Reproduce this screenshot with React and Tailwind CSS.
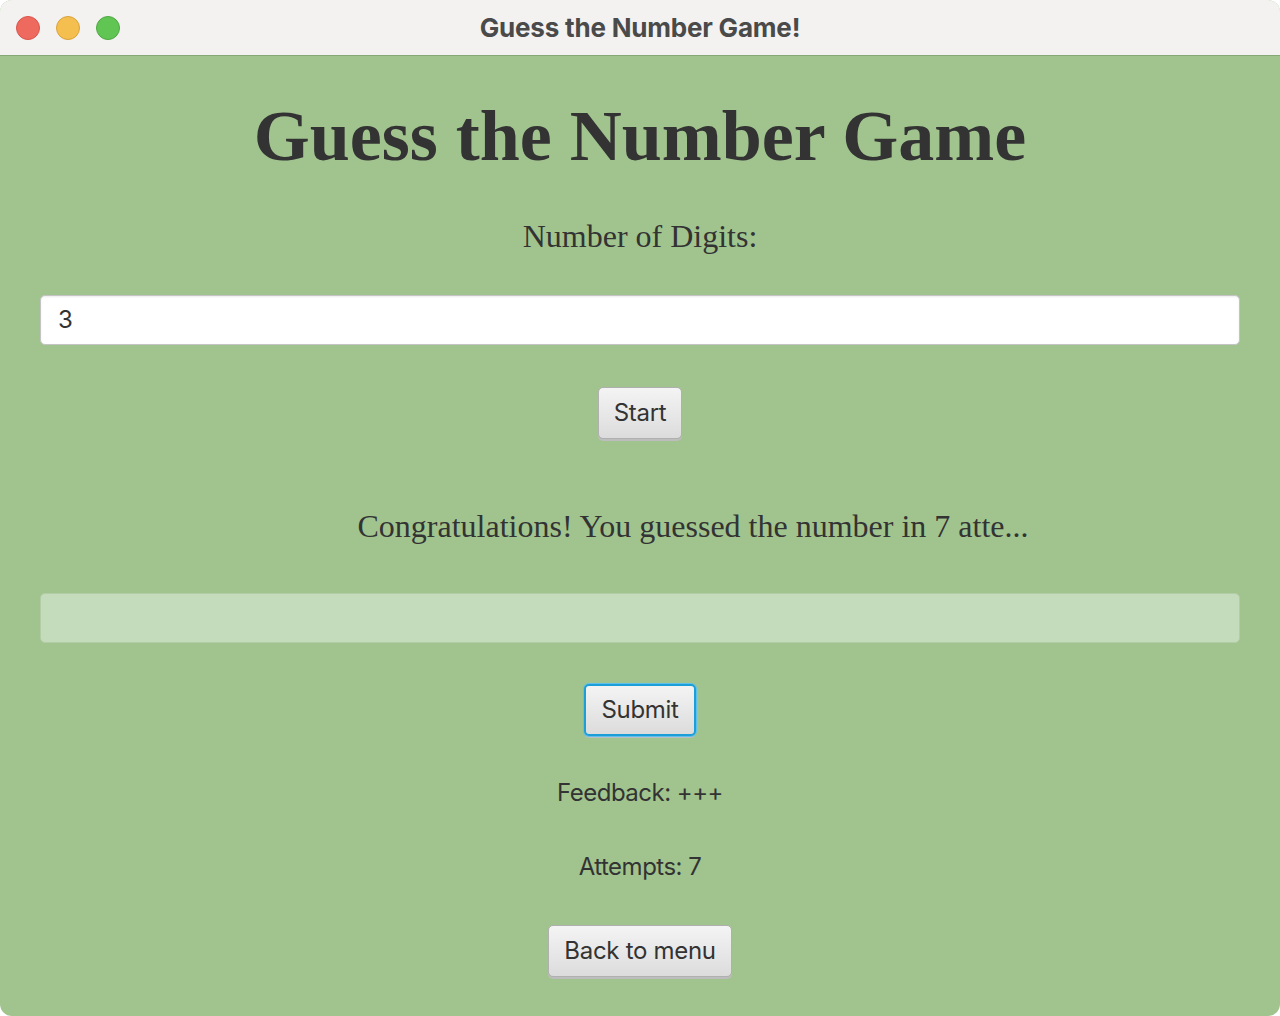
import React from "react";

const sans = { fontFamily: "Inter, 'Liberation Sans', sans-serif" };
const serif = { fontFamily: "'Liberation Serif', serif" };

const FxButton = ({ children, focused }) => (
  <button
    className={`rounded-[5px] border px-[15px] h-[52px] text-[24px] tracking-[-0.3px] text-[#333] bg-gradient-to-b from-[#f4f4f4] to-[#dcdcdc] shadow-[0_2px_0_#bdbdbd] ${
      focused ? "border-[#1c9fd8] border-2 ring-1 ring-[#5fc0ea]" : "border-[#b0b0b0]"
    }`}
    style={sans}
  >
    {children}
  </button>
);

export default function App() {
  return (
    <div className="w-[1280px] h-[1016px] bg-white">
      <div className="w-full h-full rounded-[12px] overflow-hidden flex flex-col bg-[#a1c48f]">
        <div className="h-[56px] bg-[#f3f2f1] border-b border-[#86a877] flex items-center relative shrink-0">
          <div className="flex gap-[16px] pl-[16px]">
            <span className="w-[24px] h-[24px] rounded-full bg-[#ee6a5f] border border-[#d9544a]" />
            <span className="w-[24px] h-[24px] rounded-full bg-[#f5bf4f] border border-[#d9a23c]" />
            <span className="w-[24px] h-[24px] rounded-full bg-[#61c554] border border-[#4ea843]" />
          </div>
          <div
            className="absolute inset-0 flex items-center justify-center text-[26px] font-bold text-[#4a4a4a] tracking-[-0.2px]"
            style={sans}
          >
            Guess the Number Game!
          </div>
        </div>

        <div className="flex-1 flex flex-col items-center px-[40px]">
          <h1 className="mt-[38px] text-[72px] leading-[84px] font-bold text-[#333]" style={serif}>
            Guess the Number Game
          </h1>
          <div className="mt-[39px] text-[32px] leading-[38px] text-[#333]" style={serif}>
            Number of Digits:
          </div>
          <div
            className="mt-[40px] w-full h-[50px] bg-white border border-[#c4c4c4] rounded-[5px] flex items-center px-[17px] text-[24px] text-[#333] shadow-[inset_0_1px_2px_rgba(0,0,0,0.08)]"
            style={sans}
          >
            3
          </div>
          <div className="mt-[42px]">
            <FxButton>Start</FxButton>
          </div>
          <div className="mt-[68px] pl-[106px] text-[32px] leading-[38px] text-[#333]" style={serif}>
            Congratulations! You guessed the number in 7 atte...
          </div>
          <div className="mt-[48px] w-full h-[50px] bg-[#c4dcbc] border border-[#b2cda6] rounded-[5px]" />
          <div className="mt-[41px]">
            <FxButton focused>Submit</FxButton>
          </div>
          <div className="mt-[41px] text-[24px] leading-[32px] tracking-[-0.5px] text-[#333]" style={sans}>
            Feedback: +++
          </div>
          <div className="mt-[42px] text-[24px] leading-[32px] tracking-[-0.5px] text-[#333]" style={sans}>
            Attempts: 7
          </div>
          <div className="mt-[42px]">
            <FxButton>Back to menu</FxButton>
          </div>
        </div>
      </div>
    </div>
  );
}
